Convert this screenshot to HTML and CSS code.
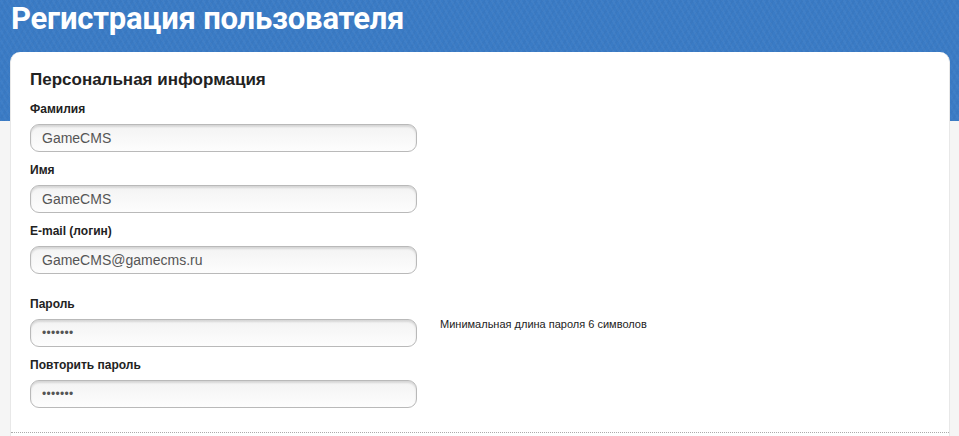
FILE: index.html
```html
<!DOCTYPE html>
<html lang="ru">
<head>
    <meta charset="UTF-8">
    <title>Регистрация пользователя</title>
    <link rel="stylesheet" href="styles.css">
</head>
<body>
    <h1 class="page-title">Регистрация пользователя</h1>
    <div class="card">
        <h2>Персональная информация</h2>
        <form class="reg-form">
            <div class="field">
                <label>Фамилия</label>
                <input type="text" value="GameCMS">
            </div>
            <div class="field">
                <label>Имя</label>
                <input type="text" value="GameCMS">
            </div>
            <div class="field">
                <label>E-mail (логин)</label>
                <input type="text" value="GameCMS@gamecms.ru">
            </div>
            <div class="field field-gap">
                <label>Пароль</label>
                <div class="with-hint">
                    <input type="password" value="1234567">
                    <span class="hint">Минимальная длина пароля 6 символов</span>
                </div>
            </div>
            <div class="field">
                <label>Повторить пароль</label>
                <input type="password" value="1234567">
            </div>
        </form>
        <div class="divider"></div>
    </div>
</body>
</html>
```

FILE: styles.css
```css
body {
    margin: 0;
    font-family: "Liberation Sans", Arial, sans-serif;
    background:
        repeating-linear-gradient(60deg, rgba(255, 255, 255, 0.03) 0 2px, transparent 2px 5px) top / 100% 121px no-repeat,
        repeating-linear-gradient(-60deg, rgba(0, 0, 0, 0.025) 0 2px, transparent 2px 5px) top / 100% 121px no-repeat,
        linear-gradient(#3a7bc5, #3a7bc5) top / 100% 121px no-repeat,
        #f5f5f5;
}
.page-title {
    margin: 0;
    height: 52px;
    padding-left: 11px;
    font-family: Roboto, "Open Sans", sans-serif;
    font-size: 31px;
    font-weight: 700;
    line-height: 38px;
    color: #fff;
    letter-spacing: -0.2px;
}
.card {
    margin: 0 9px 0 10px;
    background: #fff;
    border-radius: 10px 10px 0 0;
    border-left: 1px solid #e8e8e8;
    border-right: 1px solid #e8e8e8;
    padding: 18px 0 3px 0;
}
.card h2 {
    margin: 0 0 11px 19px;
    font-size: 17px;
    font-weight: 700;
    color: #222;
}
.reg-form {
    padding-left: 19px;
}
.field label {
    display: block;
    font-size: 12px;
    font-weight: 700;
    color: #222;
    line-height: 16px;
    margin-bottom: 7px;
}
.field {
    margin-bottom: 10px;
}
.field-gap {
    margin-top: 22px;
}
.field input {
    box-sizing: border-box;
    width: 387px;
    height: 28px;
    padding: 0 11px;
    border: 1px solid #b9b9b9;
    border-radius: 9px;
    background: linear-gradient(#f3f3f3, #fdfdfd);
    box-shadow: inset 0 2px 2px rgba(0, 0, 0, 0.12);
    font-family: "Liberation Sans", Arial, sans-serif;
    font-size: 14px;
    color: #555;
}
.field input[type=password] {
    font-size: 12px;
    letter-spacing: 0.3px;
}
.with-hint {
    display: flex;
    align-items: flex-start;
    gap: 23px;
}
.hint {
    font-size: 11px;
    line-height: 11px;
    color: #222;
}
.divider {
    border-top: 1px dotted #aaa;
    margin-top: 24px;
}
```
